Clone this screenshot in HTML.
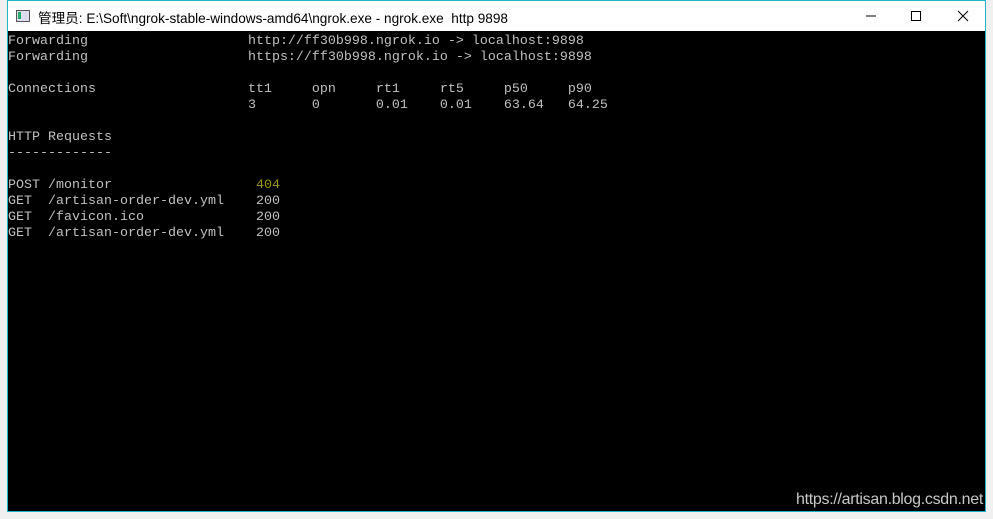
<!DOCTYPE html>
<html><head><meta charset="utf-8"><style>
body{margin:0;width:993px;height:519px;background:#f0f0f0;overflow:hidden;position:relative;font-family:"Liberation Sans",sans-serif}
.win{position:absolute;left:7px;top:0;width:977px;height:510px;border:1px solid #1fb5c9;background:#000}
.title{position:absolute;left:0;top:0;width:977px;height:30px;background:#fff}
.ttext{position:absolute;left:30px;top:6px;font-size:13.6px;color:#000;font-family:"Liberation Sans","Noto Sans CJK SC",sans-serif;white-space:pre}
.icon{position:absolute;left:8px;top:9px;width:12px;height:10px;border:1px solid #555;background:#dde}
.icon:after{content:"";position:absolute;left:1px;top:1px;width:3px;height:7px;background:#2a6;}
.con{position:absolute;left:0;top:33px;font-family:"Liberation Mono",monospace;font-size:13.33px;line-height:16px;color:#c0c0c0;white-space:pre}
.y{color:#9a9a18}
.wm{position:absolute;right:10px;top:491px;color:#c8c8c8;font-size:16px;letter-spacing:-0.3px}
</style></head><body>
<div class="win">
<div class="title"><div class="icon"></div><div class="ttext">管理员: E:\Soft\ngrok-stable-windows-amd64\ngrok.exe - ngrok.exe  http 9898</div>
<svg style="position:absolute;left:0;top:0" width="977" height="30"><path d="M858 15h10" stroke="#000" stroke-width="1"/><rect x="903.5" y="10.5" width="9" height="9" fill="none" stroke="#000"/><path d="M950 10l10 10M960 10l-10 10" stroke="#000"/></svg></div>
<div class="con">Forwarding                    http://ff30b998.ngrok.io -> localhost:9898
Forwarding                    https://ff30b998.ngrok.io -> localhost:9898

Connections                   tt1     opn     rt1     rt5     p50     p90
                              3       0       0.01    0.01    63.64   64.25

HTTP Requests
-------------

POST /monitor                  <span class="y">404</span>
GET  /artisan-order-dev.yml    200
GET  /favicon.ico              200
GET  /artisan-order-dev.yml    200</div>
</div>
<div class="wm">https://artisan.blog.csdn.net</div>
</body></html>
